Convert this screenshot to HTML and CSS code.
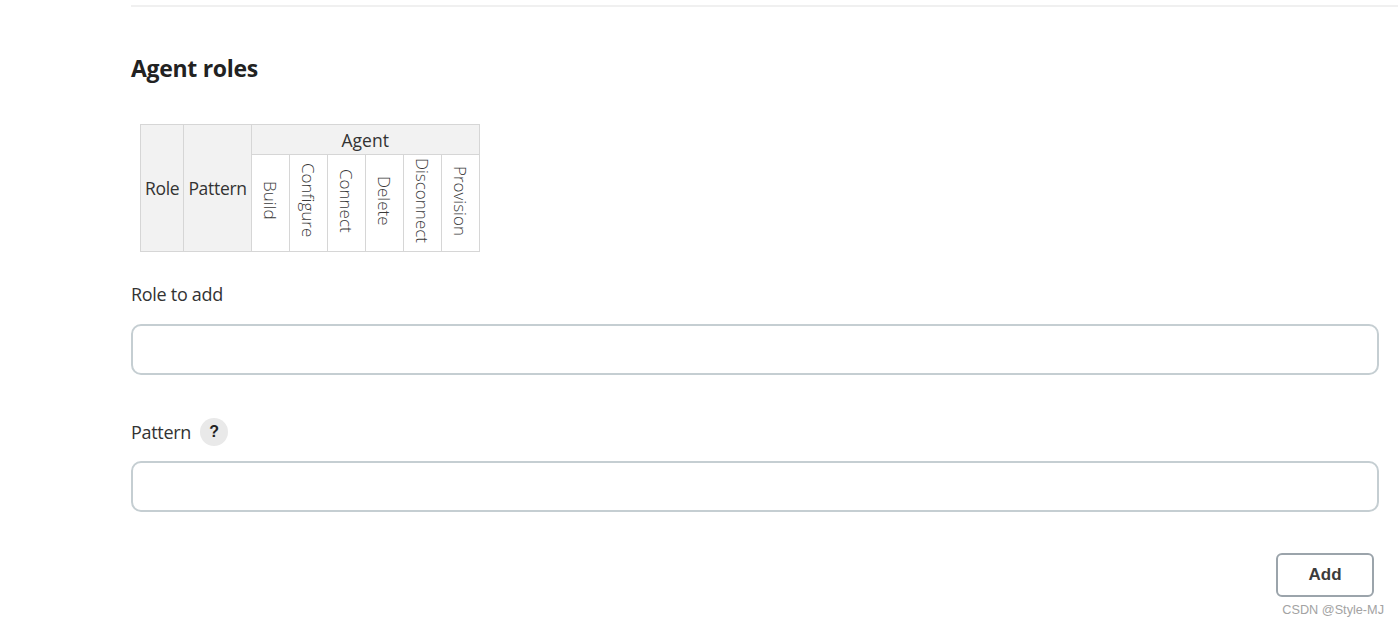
FILE: index.html
```html
<!DOCTYPE html>
<html>
<head>
<meta charset="utf-8">
<link rel="stylesheet" href="styles.css">
</head>
<body>
<div class="page">
  <div class="rule"></div>
  <h2 class="title">Agent roles</h2>
  <table class="roles">
    <tr>
      <th rowspan="2" class="side">Role</th>
      <th rowspan="2" class="side">Pattern</th>
      <th colspan="6" class="group">Agent</th>
    </tr>
    <tr>
      <th class="perm"><span>Build</span></th>
      <th class="perm"><span>Configure</span></th>
      <th class="perm"><span>Connect</span></th>
      <th class="perm"><span>Delete</span></th>
      <th class="perm"><span>Disconnect</span></th>
      <th class="perm"><span>Provision</span></th>
    </tr>
  </table>
  <div class="field">
    <label class="label">Role to add</label>
    <input class="input" type="text">
  </div>
  <div class="field field2">
    <label class="label">Pattern <span class="help">?</span></label>
    <input class="input input2" type="text">
  </div>
  <div class="actions">
    <button class="btn">Add</button>
  </div>
  <div class="mark">CSDN @Style-MJ</div>
</div>
</body>
</html>
```
FILE: styles.css
```css
html, body {
  margin: 0;
  padding: 0;
  background: #fff;
}
body {
  font-family: "Open Sans", "Noto Sans", sans-serif;
  color: #333;
}
.page {
  margin-left: 131px;
  width: 1248px;
  padding-top: 5px;
  position: relative;
  height: 622px;
}
.rule {
  height: 2px;
  background: #f0f0f0;
  margin-right: -19px;
}
.title {
  margin: 46px 0 0 0;
  font-size: 23px;
  font-weight: 700;
  line-height: 30px;
  color: #222;
  letter-spacing: -0.3px;
}
.roles {
  margin: 41px 0 0 9px;
  border-collapse: collapse;
  font-size: 17.5px;
}
.roles th {
  border: 1px solid #d6d6d6;
  font-weight: 400;
  padding: 0;
  color: #333;
}
.side {
  background: #f2f2f2;
  padding: 0 4px !important;
  letter-spacing: -0.3px;
}
.group {
  background: #f2f2f2;
  height: 29px;
}
.perm {
  background: #fff;
  width: 37px;
  height: 96px;
}
.perm span {
  writing-mode: vertical-rl;
  font-weight: 300;
  font-size: 17px;
  color: #3a3a3a;
  display: inline-block;
}
.field {
  margin-top: 30px;
}
.field2 {
  margin-top: 43px;
}
.label {
  display: flex;
  align-items: center;
  gap: 9px;
  font-size: 18px;
  height: 24px;
  color: #333;
  letter-spacing: -0.3px;
}
.field2 .label {
  height: 28px;
}
.help {
  width: 28px;
  height: 28px;
  border-radius: 50%;
  background: #e9e9e9;
  color: #222;
  font-family: "Liberation Sans", Arial, sans-serif;
  font-weight: 700;
  font-size: 16px;
  letter-spacing: 0;
  display: flex;
  align-items: center;
  justify-content: center;
}
.input {
  display: block;
  box-sizing: border-box;
  width: 1248px;
  height: 51px;
  margin-top: 18px;
  border: 2px solid #c5ced2;
  border-radius: 10px;
  background: #fff;
  outline: none;
}
.input2 {
  margin-top: 15px;
}
.actions {
  display: flex;
  justify-content: flex-end;
  margin-top: 41px;
  padding-right: 5px;
}
.btn {
  box-sizing: border-box;
  width: 98px;
  height: 44px;
  border: 2px solid #9ba4ab;
  border-radius: 6px;
  background: #fff;
  font-family: "Liberation Sans", Arial, sans-serif;
  font-weight: 700;
  font-size: 17px;
  color: #3c3c3c;
}
.mark {
  position: absolute;
  right: -5px;
  top: 603px;
  font-family: "Liberation Sans", Arial, sans-serif;
  font-size: 12.7px;
  color: #a3a3a3;
}
```
